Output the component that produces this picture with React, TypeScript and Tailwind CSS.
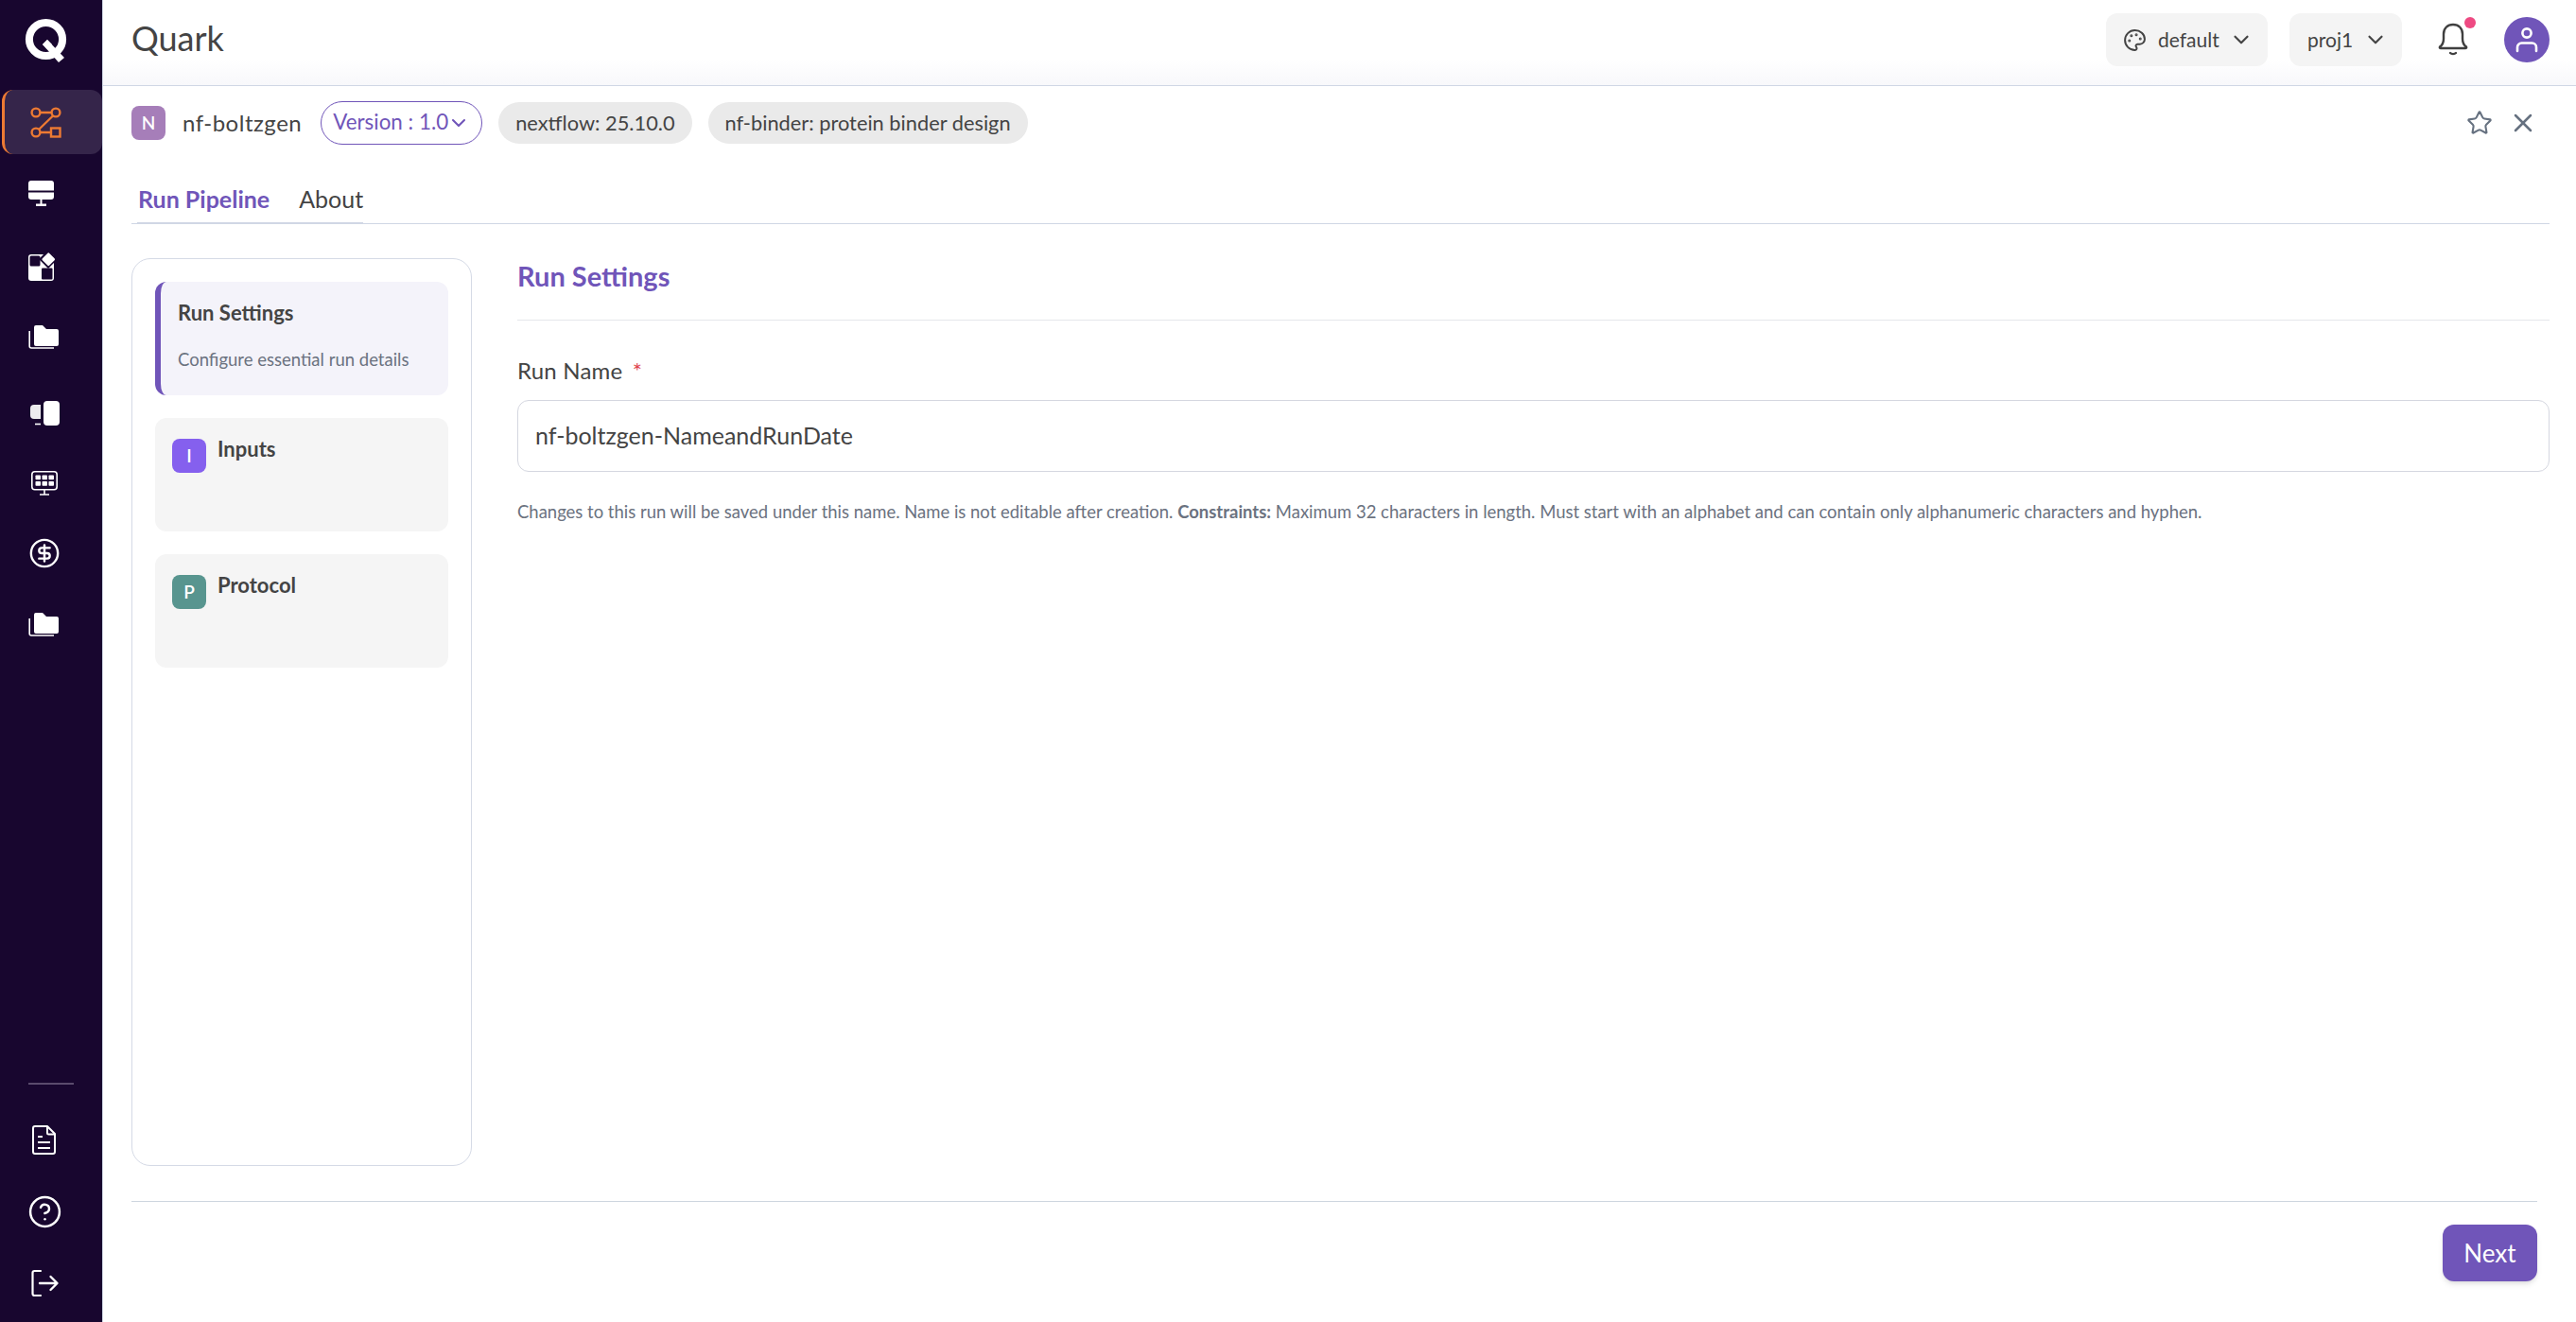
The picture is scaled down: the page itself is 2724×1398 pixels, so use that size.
import { useState } from 'react';
import { ChevronDown, CircleDollarSign, CircleHelp, Palette, Star, X } from 'lucide-react';

// sidebar icons are drawn by hand, all on the same 44 box
function Icon44({ children }: { children: React.ReactNode }) {
  return (
    <svg width="44" height="44" viewBox="0 0 44 44" fill="none">
      {children}
    </svg>
  );
}

function QLogo() {
  return (
    <svg width="48" height="52" viewBox="0 0 48 52" fill="none">
      <circle cx="23.5" cy="23.5" r="17.6" stroke="white" strokeWidth="8" />
      <path d="M20 29 L25 24 L43 43 L37 48 Z" fill="white" />
      <path d="M20 29 L25 24 L30 29 L25 34 Z" fill="white" />
    </svg>
  );
}

function PipelineIcon() {
  return (
    <Icon44>
      <g stroke="#ed7a33" strokeWidth="2.4">
        <circle cx="13" cy="12" r="4.4" />
        <circle cx="34" cy="12" r="4.4" />
        <circle cx="13" cy="33" r="4.4" />
        <rect x="29" y="28.5" width="9.5" height="9" />
        <path d="M17.5 12 H29.5 M31 15.5 L16.5 29.5 M17.5 33 H29" />
      </g>
    </Icon44>
  );
}

function ServerIcon() {
  return (
    <Icon44>
      <path d="M8 8 H29 A3 3 0 0 1 32 11 V18.5 H5 V11 A3 3 0 0 1 8 8 Z" fill="white" />
      <path d="M5 20.5 H32 V25 A3 3 0 0 1 29 28 H8 A3 3 0 0 1 5 25 Z" fill="white" />
      <path d="M17.5 28 H19.5 V32.5 H24 V35 H13 V32.5 H17.5 Z" fill="white" />
    </Icon44>
  );
}

function WidgetsIcon() {
  return (
    <Icon44>
      <rect x="5" y="10" width="27" height="28" rx="3" fill="white" />
      <rect x="6.5" y="11.5" width="11" height="11" rx="1.5" fill="#18062f" />
      <rect x="19" y="24.5" width="11.5" height="12" rx="1" fill="#18062f" />
      <rect x="19" y="8" width="14" height="14" fill="#18062f" transform="rotate(45 26 15)" />
      <rect x="21" y="10" width="10.5" height="10.5" rx="1.5" fill="white" transform="rotate(45 26.25 15.25)" />
    </Icon44>
  );
}

function FolderIcon() {
  return (
    <Icon44>
      <path
        d="M13 9 H20 L24 13 H35 A2 2 0 0 1 37 15 V29 A2 2 0 0 1 35 31 H13 A2 2 0 0 1 11 29 V11 A2 2 0 0 1 13 9 Z"
        fill="white"
      />
      <path d="M6.2 15 V31 A2 2 0 0 0 8.2 33 H32" stroke="white" strokeWidth="1.6" />
    </Icon44>
  );
}

function DesktopsIcon() {
  return (
    <Icon44>
      <rect x="21" y="13" width="17" height="26" rx="4" fill="white" />
      <path d="M18 17 H11 A4 4 0 0 0 7 21 V28 A4 4 0 0 0 11 32 H18 Z" fill="white" opacity="0.92" />
      <path d="M12 37.5 H18" stroke="white" strokeWidth="1.6" />
    </Icon44>
  );
}

function GridMonitorIcon() {
  const cells = [0, 1, 2];
  return (
    <Icon44>
      <rect x="8.8" y="11.8" width="26.4" height="19" rx="3" stroke="white" strokeWidth="1.6" />
      <path d="M22 31 V35.5 M17 36 H27" stroke="white" strokeWidth="1.6" />
      {cells.map((c) => (
        <rect key={`a${c}`} x={12.5 + c * 7} y="15.5" width="5.5" height="4.8" rx="0.8" fill="white" />
      ))}
      {cells.map((c) => (
        <rect key={`b${c}`} x={12.5 + c * 7} y="22" width="5.5" height="4.8" rx="0.8" fill="white" />
      ))}
    </Icon44>
  );
}

function DocIcon() {
  return (
    <Icon44>
      <path
        d="M12 8 H25 L33 16 V35 A2 2 0 0 1 31 37 H12 A2 2 0 0 1 10 35 V10 A2 2 0 0 1 12 8 Z"
        stroke="white"
        strokeWidth="2"
        strokeLinejoin="round"
      />
      <path d="M25 8 V15 A1.5 1.5 0 0 0 26.5 16.5 H33" stroke="white" strokeWidth="2" />
      <path d="M15 19 H20 M15 25 H28 M15 31 H28" stroke="white" strokeWidth="2.2" />
    </Icon44>
  );
}

function LogoutIcon() {
  return (
    <Icon44>
      <path
        d="M18 9 H11.5 A2 2 0 0 0 9.5 11 V33 A2 2 0 0 0 11.5 35 H18"
        stroke="white"
        strokeWidth="2.2"
        strokeLinecap="round"
      />
      <path
        d="M17 22 H35 M28.5 15 L35.5 22 L28.5 29"
        stroke="white"
        strokeWidth="2.4"
        strokeLinecap="round"
        strokeLinejoin="round"
      />
    </Icon44>
  );
}

function BellIcon() {
  return (
    <svg width="32" height="36" viewBox="0 0 32 36" fill="none" stroke="#3f3f3f" strokeWidth="2.4" strokeLinecap="round" strokeLinejoin="round">
      <path d="M2 25.5 C5 23.5 6 21 6 17 V12 C6 6 10 2 16 2 C22 2 26 6 26 12 V17 C26 21 27 23.5 30 25.5 C30.5 26.5 30 27 29 27 H3 C2 27 1.500 26.5 2 25.5 Z" />
      <path d="M13 32 C14.500 33.500 17.500 33.500 19 32" />
    </svg>
  );
}

function UserIcon() {
  return (
    <svg width="24" height="28" viewBox="0 0 24 28" fill="none" stroke="white" strokeWidth="2.6" strokeLinecap="round">
      <circle cx="12" cy="7" r="4.6" />
      <path d="M2 26 V22 A4.500 4.500 0 0 1 6.500 17.500 H17.500 A4.500 4.500 0 0 1 22 22 V26" />
    </svg>
  );
}

function SideItem({ active, children }: { active?: boolean; children: React.ReactNode }) {
  return (
    <div
      className={`flex h-[68px] items-center rounded-xl border-l-[3px] pl-5 ${
        active ? 'border-[#ed7a33] bg-[#35254a]' : 'border-transparent'
      }`}
    >
      {children}
    </div>
  );
}

const stepBadge = 'flex h-9 w-9 shrink-0 items-center justify-center rounded-lg text-[19px] font-semibold text-white';

export default function App() {
  const [tab, setTab] = useState('run');

  return (
    <div className="flex h-screen w-full overflow-hidden bg-white font-['Lato','Noto_Sans',sans-serif] text-[#444444]">
      <aside className="flex w-[109px] shrink-0 flex-col border-r border-[#d0d7e5] bg-[#18062f] pl-[2px]">
        <div className="flex h-[95px] items-start pl-[23px] pt-[18px]">
          <QLogo />
        </div>
        <nav className="flex flex-col gap-2">
          <SideItem active>
            <PipelineIcon />
          </SideItem>
          <SideItem>
            <ServerIcon />
          </SideItem>
          <SideItem>
            <WidgetsIcon />
          </SideItem>
          <SideItem>
            <FolderIcon />
          </SideItem>
          <SideItem>
            <DesktopsIcon />
          </SideItem>
          <SideItem>
            <GridMonitorIcon />
          </SideItem>
          <SideItem>
            <div className="flex w-11 justify-center">
              <CircleDollarSign size={34} color="white" strokeWidth={1.7} />
            </div>
          </SideItem>
          <SideItem>
            <FolderIcon />
          </SideItem>
        </nav>
        <div className="mt-auto flex flex-col gap-2 pb-[7px]">
          <div className="mb-[16px] ml-[28px] h-[2px] w-12 bg-[#5a4b6d]" />
          <SideItem>
            <DocIcon />
          </SideItem>
          <SideItem>
            <div className="flex w-11 justify-center">
              <CircleHelp size={37} color="white" strokeWidth={1.6} />
            </div>
          </SideItem>
          <SideItem>
            <LogoutIcon />
          </SideItem>
        </div>
      </aside>

      <main className="flex min-w-0 flex-1 flex-col">
        <header className="flex h-[91px] shrink-0 items-center border-b border-[#d0d7e5] bg-linear-to-b from-white from-70% to-[#f8f8fb] pb-[6px] pl-[30px] pr-[28px]">
          <div className="-mt-[5px] text-[36px] leading-none">Quark</div>
          <div className="ml-auto flex items-center">
            <button type="button" className="flex h-14 w-[171px] items-center rounded-xl bg-[#f4f4f4] pl-[18px] text-[21px]">
              <Palette size={25} strokeWidth={1.9} />
              <span className="ml-[12px]">default</span>
              <ChevronDown size={26} strokeWidth={2} className="ml-auto mr-[15px]" />
            </button>
            <button type="button" className="ml-[23px] flex h-14 w-[119px] items-center rounded-xl bg-[#f4f4f4] pl-[19px] text-[21px]">
              <span>proj1</span>
              <ChevronDown size={26} strokeWidth={2} className="ml-auto mr-[15px]" />
            </button>
            <div className="relative ml-[38px] flex h-10 w-8 items-center justify-center">
              <BellIcon />
              <span className="absolute -right-[8px] -top-[4px] h-3 w-3 rounded-full bg-[#ee4a82]" />
            </div>
            <div className="ml-[38px] flex h-12 w-12 items-center justify-center rounded-full bg-[#7055b9]">
              <UserIcon />
            </div>
          </div>
        </header>

        <div className="flex min-h-0 flex-1 flex-col pl-[30px] pr-[28px]">
          <div className="flex h-[78px] shrink-0 items-center">
            <div className="flex h-9 w-9 items-center justify-center rounded-lg bg-[#a67eb9] text-[19px] font-semibold text-white">N</div>
            <div className="ml-[18px] text-[24px] tracking-[0.5px]">nf-boltzgen</div>
            <button type="button" className="ml-5 flex h-[46px] w-[171px] shrink-0 items-center rounded-full border-[1.5px] border-[#7055b9] pb-[2px] pl-[12px] text-[22.400px] text-[#7055b9]">
              <span className="whitespace-nowrap">Version : 1.0</span>
              <ChevronDown size={24} strokeWidth={2.1} className="-ml-[1px] mt-[2px] shrink-0" />
            </button>
            <span className="ml-[17px] flex h-11 items-center rounded-full bg-[#eaeaea] px-[18px] text-[21.800px]">nextflow: 25.10.0</span>
            <span className="ml-[17px] flex h-11 items-center rounded-full bg-[#eaeaea] px-[18px] text-[21.800px]">nf-binder: protein binder design</span>
            <Star size={28} strokeWidth={1.8} className="ml-auto text-[#667180]" />
            <X size={32} strokeWidth={1.9} className="ml-4 mr-3 text-[#667180]" />
          </div>

          <div className="flex h-[68px] shrink-0 items-end border-b border-[#d0d7e5]">
            <div className="-mb-px ml-[6px] flex gap-[31px] border-b-2 border-[#d0d7e5]">
              <button
                type="button"
                onClick={() => setTab('run')}
                className={`pb-2 pl-[1px] text-[25px] leading-[34px] ${tab === 'run' ? 'font-bold text-[#7055b9]' : ''}`}
              >
                Run Pipeline
              </button>
              <button
                type="button"
                onClick={() => setTab('about')}
                className={`pb-2 text-[25px] leading-[34px] ${tab === 'about' ? 'font-bold text-[#7055b9]' : ''}`}
              >
                About
              </button>
            </div>
          </div>

          <div className="mt-9 flex min-h-0 flex-1">
            <div className="flex w-[360px] shrink-0 flex-col gap-6 rounded-[20px] border border-[#d5dae6] p-6">
              <div className="h-[120px] rounded-xl border-l-[6px] border-[#7055b9] bg-[#f4f3fa] pl-[18px] pt-[19px]">
                <div className="text-[22px] font-bold leading-7">Run Settings</div>
                <div className="mt-[21px] text-[18.500px] leading-7 text-[#6b7280]">Configure essential run details</div>
              </div>
              <div className="flex h-[120px] gap-3 rounded-xl bg-[#f5f5f5] pl-[18px] pt-[22px]">
                <div className={`${stepBadge} bg-[#8560ee]`}>I</div>
                <div className="text-[22px] font-bold leading-[22px]">Inputs</div>
              </div>
              <div className="flex h-[120px] gap-3 rounded-xl bg-[#f5f5f5] pl-[18px] pt-[22px]">
                <div className={`${stepBadge} bg-[#58958f]`}>P</div>
                <div className="text-[22px] font-bold leading-[22px]">Protocol</div>
              </div>
            </div>

            <div className="ml-12 min-w-0 flex-1">
              <div className="border-b border-[#e5e7eb] pb-[27px] text-[29px] font-bold leading-[38px] text-[#7055b9]">Run Settings</div>
              <div className="mt-9 text-[24px] leading-[34px] tracking-[0.2px]">
                Run Name <span className="ml-1 text-[#e0454f]">*</span>
              </div>
              <input
                readOnly
                value="nf-boltzgen-NameandRunDate"
                className="mt-[14px] h-[76px] w-full rounded-xl border border-[#d5d7e0] px-[18px] pb-[2px] text-[25px] outline-none"
              />
              <p className="mt-7 text-[18.480px] leading-7 text-[#6b7280]">
                Changes to this run will be saved under this name. Name is not editable after creation.{' '}
                <span className="font-bold">Constraints:</span> Maximum 32 characters in length. Must start with an alphabet and can contain only alphanumeric characters and hyphen.
              </p>
            </div>
          </div>

          <div className="mr-[13px] mt-[37px] flex shrink-0 justify-end border-t border-[#cdd5df] pb-[43px] pt-6">
            <button type="button" className="h-[60px] w-[100px] rounded-xl bg-[#7055b9] text-[26px] text-white shadow-md">
              Next
            </button>
          </div>
        </div>
      </main>
    </div>
  );
}
